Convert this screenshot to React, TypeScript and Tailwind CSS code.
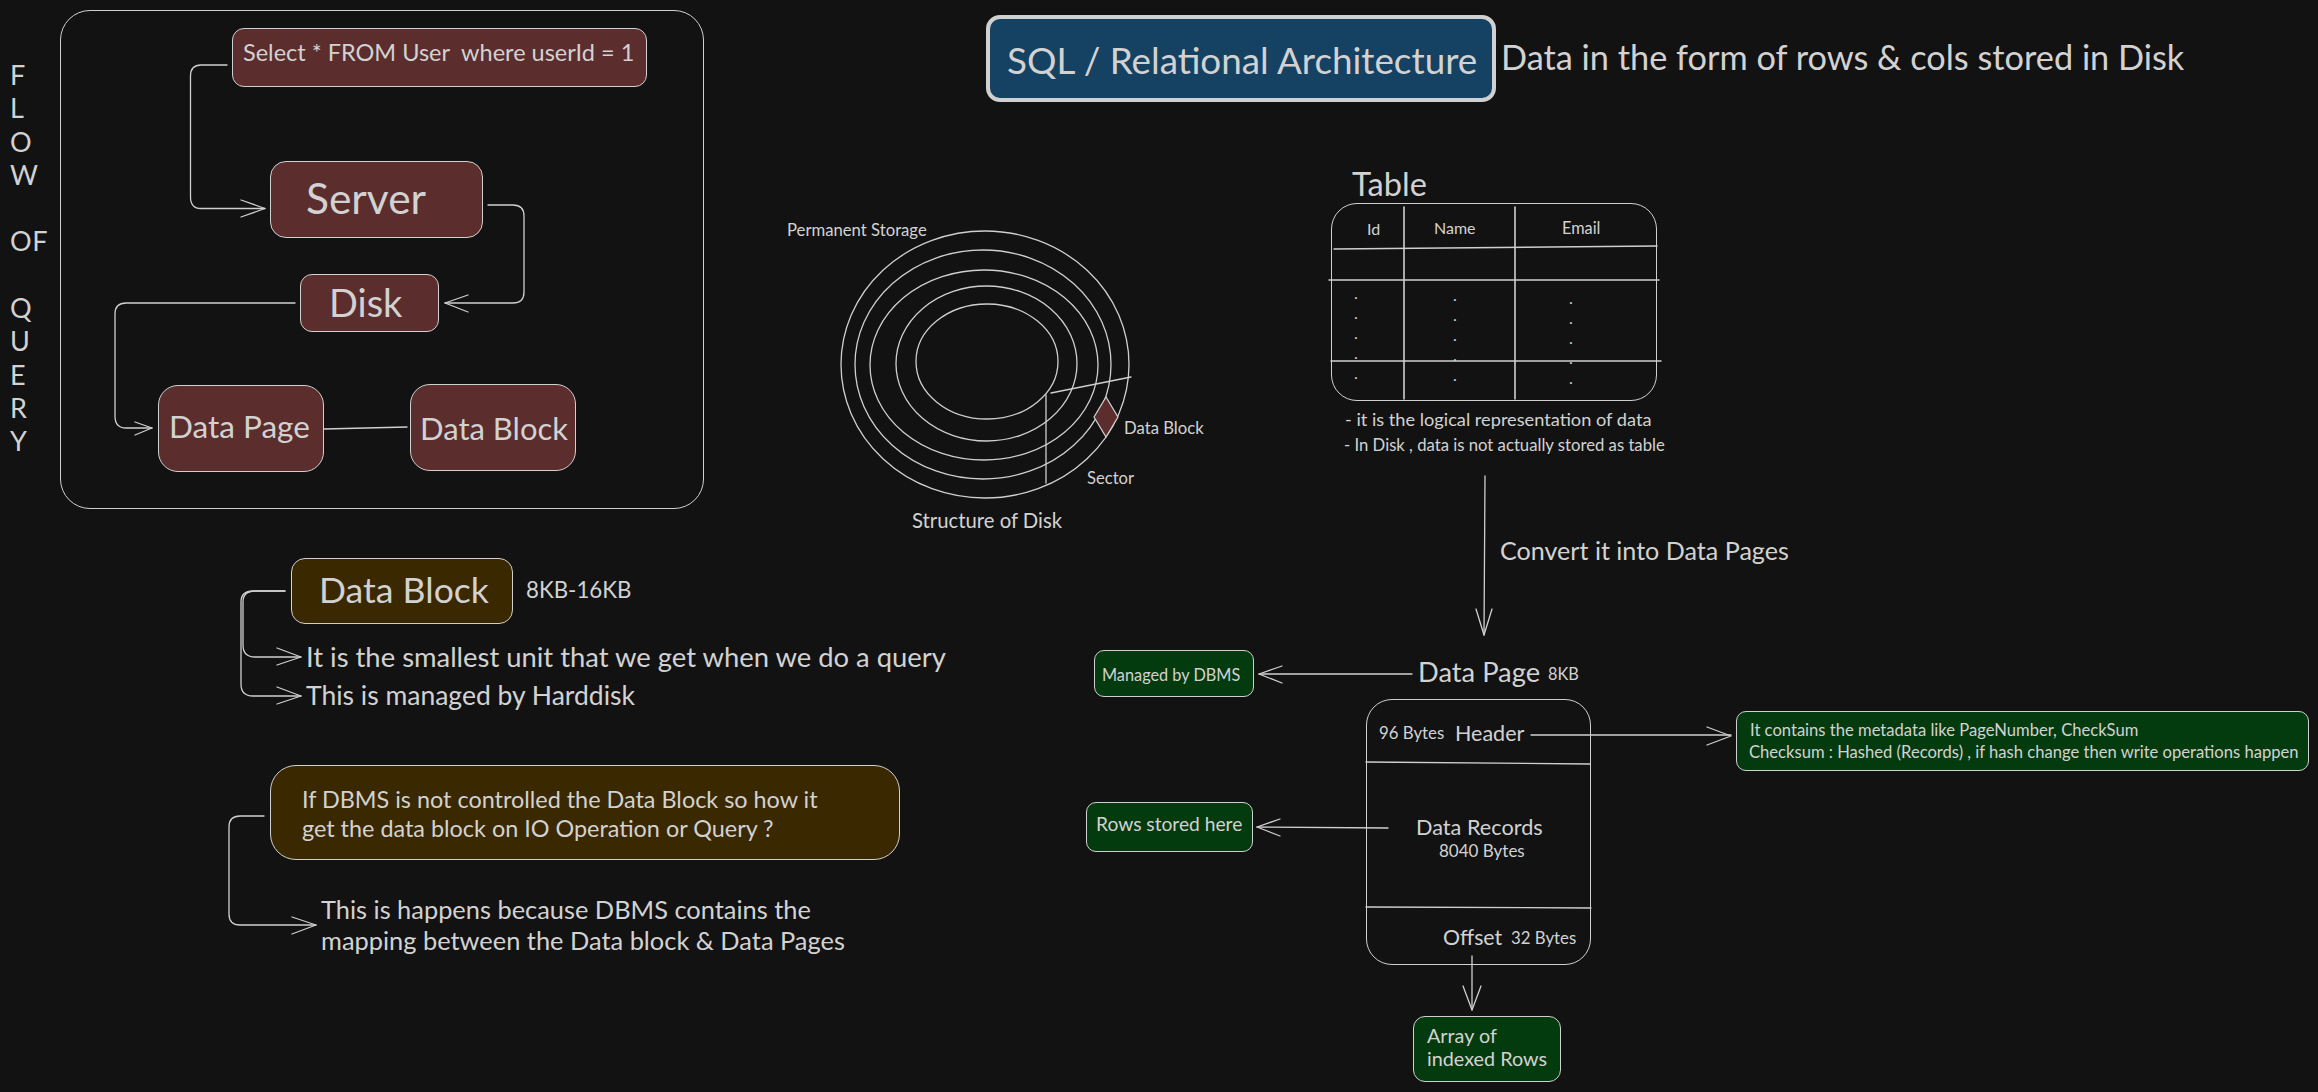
import React from "react";

const T = ({ c, children }: { c: string; children: React.ReactNode }) => (
  <div className={"absolute -translate-y-1/2 whitespace-nowrap " + c}>{children}</div>
);

const Box = ({ c, children }: { c: string; children?: React.ReactNode }) => (
  <div className={"absolute box-border border-[1.5px] border-[#d0d0d0] " + c}>{children}</div>
);

const Dots = ({ c }: { c: string }) => (
  <div className={"absolute flex flex-col text-[16px] leading-[20px] " + c}>
    <span>.</span>
    <span>.</span>
    <span>.</span>
    <span>.</span>
    <span>.</span>
  </div>
);

const red = "bg-[#5b2d2d]";
const yellow = "bg-[#3a2800]";
const green = "bg-[#043b0e]";

export default function App() {
  return (
    <div className="relative w-[2318px] h-[1092px] overflow-hidden bg-[#121212] text-[#d2d2d2] [font-family:Lato,sans-serif]">
      {/* Flow of query */}
      <div className="absolute left-[10px] top-[58px] flex flex-col text-[27px] leading-[33.3px] tracking-[0.02em]">
        <span>F</span>
        <span>L</span>
        <span>O</span>
        <span>W</span>
        <span className="h-[33.3px]" />
        <span>OF</span>
        <span className="h-[33.3px]" />
        <span>Q</span>
        <span>U</span>
        <span>E</span>
        <span>R</span>
        <span>Y</span>
      </div>
      <Box c="left-[60px] top-[10px] w-[644px] h-[499px] rounded-[30px]" />
      <Box c={`left-[232px] top-[28px] w-[415px] h-[59px] rounded-[12px] pl-[10px] pt-[8px] text-[23.5px] leading-[30px] whitespace-pre ${red}`}>
        Select * FROM User  where userId = 1
      </Box>
      <Box c={`left-[270px] top-[161px] w-[213px] h-[77px] rounded-[16px] pl-[35px] pt-[11px] text-[42.5px] leading-[50px] ${red}`}>
        Server
      </Box>
      <Box c={`left-[300px] top-[274px] w-[139px] h-[58px] rounded-[12px] pl-[28px] pt-[5px] text-[38px] leading-[44px] ${red}`}>
        Disk
      </Box>
      <Box c={`left-[158px] top-[385px] w-[166px] h-[87px] rounded-[20px] pl-[10px] pt-[21px] text-[31.5px] leading-[38px] ${red}`}>
        Data Page
      </Box>
      <Box c={`left-[410px] top-[384px] w-[166px] h-[87px] rounded-[20px] pl-[9px] pt-[24px] text-[31px] leading-[38px] ${red}`}>
        Data Block
      </Box>

      {/* Data block notes */}
      <Box c={`left-[291px] top-[558px] w-[222px] h-[66px] rounded-[14px] pl-[27px] pt-[10px] text-[35.6px] leading-[42px] ${yellow}`}>
        Data Block
      </Box>
      <T c="left-[526px] top-[590px] text-[22.3px]">8KB-16KB</T>
      <T c="left-[306px] top-[657px] text-[27.4px]">It is the smallest unit that we get when we do a query</T>
      <T c="left-[306px] top-[696px] text-[26.5px]">This is managed by Harddisk</T>
      <Box c={`left-[270px] top-[765px] w-[630px] h-[95px] rounded-[26px] pl-[31px] pt-[19px] text-[23.4px] leading-[28.5px] ${yellow}`}>
        <div>If DBMS is not controlled the Data Block so how it</div>
        <div>get the data block on IO Operation or Query ?</div>
      </Box>
      <div className="absolute left-[321px] top-[894px] text-[25.4px] leading-[31px]">
        <div>This is happens because DBMS contains the</div>
        <div>mapping between the Data block &amp; Data Pages</div>
      </div>

      {/* Title */}
      <Box c="left-[986px] top-[15px] w-[510px] h-[87px] !border-[4px] rounded-[14px] bg-[#154162] pl-[17px] pt-[18px] text-[36.8px] leading-[46px] whitespace-nowrap">
        SQL / Relational Architecture
      </Box>
      <T c="left-[1501px] top-[57px] text-[34.3px]">Data in the form of rows &amp; cols stored in Disk</T>

      {/* Disk labels */}
      <T c="left-[787px] top-[231px] text-[16.7px]">Permanent Storage</T>
      <T c="left-[1124px] top-[429px] text-[16.7px]">Data Block</T>
      <T c="left-[1087px] top-[478px] text-[16.6px]">Sector</T>
      <T c="left-[912px] top-[520px] text-[20.3px]">Structure of Disk</T>

      {/* Table */}
      <T c="left-[1352px] top-[184px] text-[32.6px]">Table</T>
      <Box c="left-[1331px] top-[203px] w-[326px] h-[198px] rounded-[26px]" />
      <T c="left-[1367px] top-[229px] text-[16px]">Id</T>
      <T c="left-[1434px] top-[228px] text-[16px]">Name</T>
      <T c="left-[1562px] top-[228px] text-[16.300px]">Email</T>
      <Dots c="left-[1354px] top-[283px]" />
      <Dots c="left-[1453px] top-[285px]" />
      <Dots c="left-[1569px] top-[288px]" />
      <T c="left-[1345px] top-[420px] text-[18.200px]">- it is the logical representation of data</T>
      <T c="left-[1344px] top-[446px] text-[16.700px]">- In Disk , data is not actually stored as table</T>
      <T c="left-[1500px] top-[550.500px] text-[25.100px]">Convert it into Data Pages</T>

      {/* Data page */}
      <T c="left-[1418px] top-[672px] text-[27.300px]">Data Page</T>
      <T c="left-[1548px] top-[674px] text-[16.300px]">8KB</T>
      <Box c={`left-[1094px] top-[650px] w-[160px] h-[47px] rounded-[10px] pl-[7px] pt-[13px] text-[16.300px] leading-[22px] whitespace-nowrap ${green}`}>
        Managed by DBMS
      </Box>
      <Box c="left-[1366px] top-[699px] w-[225px] h-[266px] rounded-[26px]" />
      <T c="left-[1379px] top-[733px] text-[16.800px]">96 Bytes</T>
      <T c="left-[1455px] top-[733px] text-[21.500px]">Header</T>
      <T c="left-[1416px] top-[827px] text-[21.700px]">Data Records</T>
      <T c="left-[1439px] top-[851px] text-[17px]">8040 Bytes</T>
      <T c="left-[1443px] top-[938px] text-[21.300px]">Offset</T>
      <T c="left-[1511px] top-[938px] text-[16.800px]">32 Bytes</T>
      <Box c={`left-[1086px] top-[802px] w-[167px] h-[50px] rounded-[10px] pl-[9px] pt-[9px] text-[19.200px] leading-[24px] whitespace-nowrap ${green}`}>
        Rows stored here
      </Box>
      <Box c={`left-[1413px] top-[1016px] w-[148px] h-[66px] rounded-[12px] pl-[13px] pt-[7px] text-[19.800px] leading-[23px] whitespace-nowrap ${green}`}>
        <div>Array of</div>
        <div>indexed Rows</div>
      </Box>
      <Box c={`left-[1736px] top-[711px] w-[573px] h-[60px] rounded-[10px] pl-[12px] pt-[7px] text-[16.600px] leading-[22px] whitespace-nowrap ${green}`}>
        <div className="pl-[1px]">It contains the metadata like PageNumber, CheckSum</div>
        <div>Checksum : Hashed (Records) , if hash change then write operations happen</div>
      </Box>

      {/* Connectors, disk and table rules */}
      <svg className="absolute left-0 top-0 pointer-events-none" width="2318" height="1092" viewBox="0 0 2318 1092" fill="none" stroke="#cfcfcf" strokeWidth="1.3" strokeLinecap="round" strokeLinejoin="round">
        {/* flow */}
        <path d="M227 65H201Q190.500 65 190.500 76V197Q190.500 208.500 201 208.500H265" />
        <path d="M241 200L265 208.500L241 217" />
        <path d="M488 205H513Q524 205 524 216V292Q524 303 513 303H445" />
        <path d="M468 295L445 303L468 312" />
        <path d="M295 303H126Q115 303 115 314V416Q115 428 126 428H152" />
        <path d="M135 422L152 428L135 435" />
        <path d="M324 429L407 427" />
        {/* data block */}
        <path d="M285 591H255Q243 591 243 602V645Q243 657 255 657H301" />
        <path d="M285 591H253Q241 591 241 602V684Q241 696 253 696H301" />
        <path d="M277 648L301 657L277 665" />
        <path d="M277 687L301 696L277 704" />
        <path d="M264 816H240Q229 816 229 827V914Q229 925 240 925H316" />
        <path d="M292 917L316 925L292 934" />
        {/* disk */}
        <ellipse cx="985" cy="364.500" rx="144" ry="133.500" />
        <ellipse cx="983" cy="364.500" rx="128" ry="114.500" />
        <ellipse cx="984" cy="365" rx="114" ry="95" />
        <ellipse cx="986.500" cy="363.500" rx="90.500" ry="77.500" />
        <ellipse cx="987" cy="361.500" rx="71" ry="57.500" />
        <path d="M1051 393L1131 377" />
        <path d="M1046 395L1046 483" />
        <path d="M1106 397L1118 417L1106 437L1094 417Z" fill="#5b2d2d" />
        {/* table */}
        <path d="M1404 207V399M1515 207V399" strokeWidth="1.6" />
        <path d="M1334 249L1657 246M1329 280H1659M1331 361H1661" strokeWidth="1.5" />
        {/* convert */}
        <path d="M1485 476L1484 635" />
        <path d="M1476 609L1484 635L1492 609" />
        {/* page arrows */}
        <path d="M1412 674H1259" />
        <path d="M1282 666L1259 674L1282 683" />
        <path d="M1531 735H1731" />
        <path d="M1707 727L1731 736L1707 745" />
        <path d="M1366 762L1590 764M1366 907L1591 908" />
        <path d="M1388 828L1257 827" />
        <path d="M1280 819L1257 827L1280 836" />
        <path d="M1472 956V1010" />
        <path d="M1463 986L1472 1010L1481 986" />
      </svg>
    </div>
  );
}
